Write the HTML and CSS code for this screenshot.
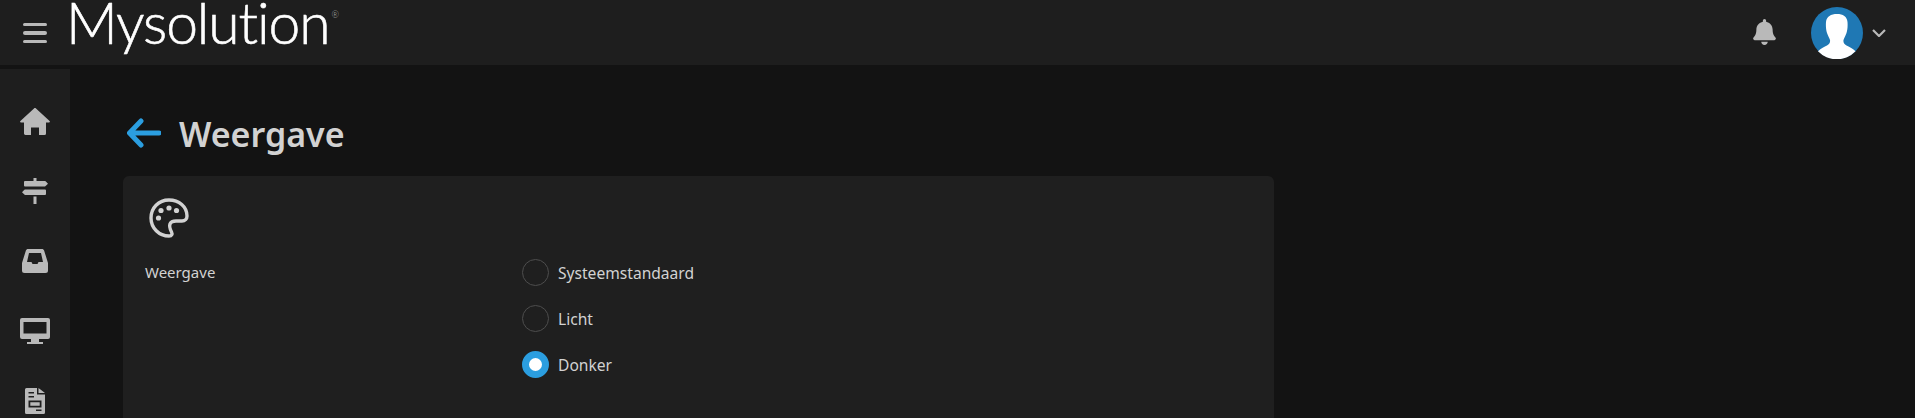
FILE: index.html
```html
<!DOCTYPE html>
<html lang="nl">
  <head>
    <meta charset="UTF-8" />
    <meta name="viewport" content="width=device-width, initial-scale=1.0" />
    <title>Weergave</title>
    <link rel="stylesheet" href="styles.css">
  </head>
  <body>
    <header class="topbar">
      <div class="hamburger"><span></span><span></span><span></span></div>
      <div class="logo">Mysolution<sup>®</sup></div>
      <div class="topbar-right">
        <svg class="bell" viewBox="0 0 448 512"><path d="M224 512c35.32 0 63.97-28.65 63.97-64H160.03c0 35.35 28.65 64 63.97 64zm215.39-149.71c-19.32-20.76-55.47-51.99-55.47-154.29 0-77.7-54.48-139.9-127.94-155.16V32c0-17.67-14.32-32-31.98-32s-31.98 14.33-31.98 32v20.84C118.56 68.1 64.08 130.3 64.08 208c0 102.3-36.15 133.53-55.47 154.29-6 6.45-8.66 14.16-8.61 21.71.11 16.4 12.98 32 32.1 32h383.8c19.12 0 32-15.6 32.1-32 .05-7.55-2.61-15.27-8.61-21.71z"/></svg>
        <svg class="avatar" viewBox="0 0 52 52">
          <circle cx="26" cy="26" r="26" fill="#1f78b4"/>
          <path fill="#fff" d="M26 7c6 0 10 2.500 10.500 8 .3 4 0 8-1 11-.7 2.500-2.500 5-3 7-.4 2 .5 4 3 5.500 2.500 1.500 6 2.500 9 5.800A26 26 0 0 1 7 44.300c3-3.300 6.500-4.300 9-5.800 2.500-1.500 3.400-3.500 3-5.500-.5-2-2.300-4.500-3-7-1-3-1.300-7-1-11C15.500 9.500 20 7 26 7z"/>
        </svg>
        <svg class="chevron" viewBox="0 0 14 8"><path d="M1 1l6 6 6-6"/></svg>
      </div>
    </header>

    <div class="layout">
      <nav class="sidebar">
        <a class="nav-item">
          <svg viewBox="0 0 30 27" width="30" height="27"><path d="M15 0c.4 0 .7.100 1 .4L29.600 13c.6.600.2 1.400-.6 1.400h-3v11a1.500 1.500 0 0 1-1.500 1.500H19v-7.500h-8V27H5.500A1.500 1.500 0 0 1 4 25.400v-11H1c-.8 0-1.200-.8-.6-1.400L14 .4c.3-.3.600-.4 1-.4z"/></svg>
        </a>
        <a class="nav-item">
          <svg viewBox="0 0 26 26" width="26" height="26"><path d="M11.500 0h3v3H23a.8.800 0 0 1 .6.300L26 5.700l-2.400 2.400a.8.800 0 0 1-.6.300H3a1 1 0 0 1-1-1V4a1 1 0 0 1 1-1h8.500zM3 11.500h20a1 1 0 0 1 1 1v3.400a1 1 0 0 1-1 1H3a.8.800 0 0 1-.6-.300L0 14.200l2.400-2.400a.8.800 0 0 1 .6-.300zM11.500 18.500h3V26h-3z"/></svg>
        </a>
        <a class="nav-item">
          <svg viewBox="0 0 26 24" width="26" height="24"><path fill-rule="evenodd" d="M6 0h14c1 0 1.800.6 2.100 1.500L26 14v7.500a2.500 2.500 0 0 1-2.500 2.500h-21A2.500 2.500 0 0 1 0 21.500V14L3.900 1.500C4.200.6 5 0 6 0zM7 4L5 13h4.500l1 2h5l1-2H21L19 4z"/></svg>
        </a>
        <a class="nav-item">
          <svg viewBox="0 0 30 26" width="30" height="26"><path fill-rule="evenodd" d="M2 0h26a2 2 0 0 1 2 2v17a2 2 0 0 1-2 2H19v3h4v2H7v-2h4v-3H2a2 2 0 0 1-2-2V2a2 2 0 0 1 2-2zm1.500 4v11.500h23V4z"/></svg>
        </a>
        <a class="nav-item">
          <svg viewBox="0 0 20 26" width="20" height="26"><path fill-rule="evenodd" d="M1.500 0H12v6.500h8v18a1.500 1.500 0 0 1-1.500 1.500h-17A1.500 1.500 0 0 1 0 24.500v-23A1.500 1.500 0 0 1 1.500 0zM13.500 0L20 5h-6.500zM3.500 4v1.500H9V4zm0 4v1.500H9V8zm0 4.500v7h13v-7zm1.800 1.800h9.400v3.400H5.300zM11 21.500V23h5.500v-1.500z"/></svg>
        </a>
      </nav>

      <main class="content">
        <div class="page-title">
          <svg class="back" viewBox="0 0 34 30"><path d="M32 15H3M14 3L2.500 15 14 27"/></svg>
          <h1>Weergave</h1>
        </div>

        <section class="card">
          <svg class="palette" viewBox="0 0 40 40">
            <path class="palette-line" d="M20 2C9.500 2 2 10 2 20s8 18 18 18c3 0 3.500-2 2.500-4-1.500-3-2.500-5.500-1.500-8 1-2.500 3-3 6-3h6c3 0 5-2 5-5C38 8.500 30 2 20 2z"/>
            <circle cx="20" cy="10" r="2.600"/><circle cx="12" cy="12.500" r="2.600"/><circle cx="27.500" cy="12.500" r="2.600"/><circle cx="9.500" cy="20" r="2.600"/>
          </svg>
          <div class="form-row">
            <div class="form-label">Weergave</div>
            <div class="radio-group">
              <label class="radio"><input type="radio" name="theme" /><span>Systeemstandaard</span></label>
              <label class="radio"><input type="radio" name="theme" /><span>Licht</span></label>
              <label class="radio"><input type="radio" name="theme" checked /><span>Donker</span></label>
            </div>
          </div>
        </section>
      </main>
    </div>
  </body>
</html>
```

FILE: styles.css
```css
html,
body {
  height: 100%;
}

body {
  margin: 0;
  overflow: hidden;
  background-color: #131313;
  color: #d2d2d2;
  font-family: "Noto Sans", sans-serif;
  font-size: 15.600px;
}

svg {
  display: block;
  fill: #b9b9b9;
}

.topbar {
  display: flex;
  align-items: center;
  height: 65px;
  padding: 0 29px 0 23px;
  background-color: #1e1e1e;
}

.hamburger {
  display: flex;
  flex-direction: column;
  gap: 5px;
  width: 24px;
  margin-top: 1px;
}

.hamburger span {
  height: 3.500px;
  border-radius: 2px;
  background-color: #b9b9b9;
}

.logo {
  align-self: flex-start;
  margin-left: 19px;
  color: #fff;
  font-family: "Lato", sans-serif;
  font-size: 57px;
  font-weight: 300;
  -webkit-text-stroke: 0.600px #fff;
  letter-spacing: -1.100px;
  line-height: 44px;
  white-space: nowrap;
}

.logo sup {
  font-size: 9px;
  line-height: 0;
  letter-spacing: 0;
  vertical-align: 26px;
  margin-left: 2px;
  color: #aaa;
  -webkit-text-stroke: 0;
}

.topbar-right {
  display: flex;
  align-items: center;
  margin-left: auto;
}

.bell {
  width: 23px;
  height: 26px;
  margin-top: -1px;
}

.avatar {
  width: 52px;
  height: 52px;
  margin-left: 35px;
}

.chevron {
  width: 14px;
  height: 8px;
  margin-left: 9px;
  fill: none;
  stroke: #b9b9b9;
  stroke-width: 2.200;
}

.layout {
  display: flex;
  height: calc(100% - 65px);
}

.sidebar {
  flex: none;
  display: flex;
  flex-direction: column;
  width: 70px;
  margin-top: 4px;
  padding-top: 17px;
  background-color: #1e1e1e;
}

.nav-item {
  flex: none;
  display: flex;
  align-items: center;
  justify-content: center;
  height: 70px;
}

.content {
  flex: 1;
  min-width: 0;
  padding: 0 0 0 53px;
}

.page-title {
  display: flex;
  align-items: center;
  box-sizing: border-box;
  height: 111px;
  padding: 23px 0 0 4px;
}

.back {
  width: 34px;
  height: 30px;
  margin-top: 1px;
  fill: none;
  stroke: #2b9ee0;
  stroke-width: 5;
  stroke-linecap: round;
  stroke-linejoin: round;
}

.page-title h1 {
  margin: 4px 0 0 18px;
  font-size: 34px;
  font-weight: 600;
  color: #d2d2d2;
}

.card {
  width: 1151px;
  height: 400px;
  padding: 22px;
  box-sizing: border-box;
  border-radius: 6px;
  background-color: #1f1f1f;
}

.palette {
  width: 40px;
  height: 40px;
  margin-left: 4px;
  fill: #d2d2d2;
}

.palette-line {
  fill: none;
  stroke: #d2d2d2;
  stroke-width: 3.400;
}

.form-row {
  display: grid;
  grid-template-columns: 377px 1fr;
  margin-top: 23px;
}

.form-label {
  font-size: 15px;
  line-height: 22px;
}

.radio-group {
  display: flex;
  flex-direction: column;
  gap: 19px;
  margin-top: -2px;
}

.radio {
  display: flex;
  align-items: center;
  gap: 9px;
  height: 27px;
}

.radio input {
  appearance: none;
  width: 27px;
  height: 27px;
  margin: 0;
  border: 1px solid #4d4d4d;
  border-radius: 50%;
  box-sizing: border-box;
}

.radio input:checked {
  border: 7px solid #2b9ee0;
  background-color: #fff;
}
```
